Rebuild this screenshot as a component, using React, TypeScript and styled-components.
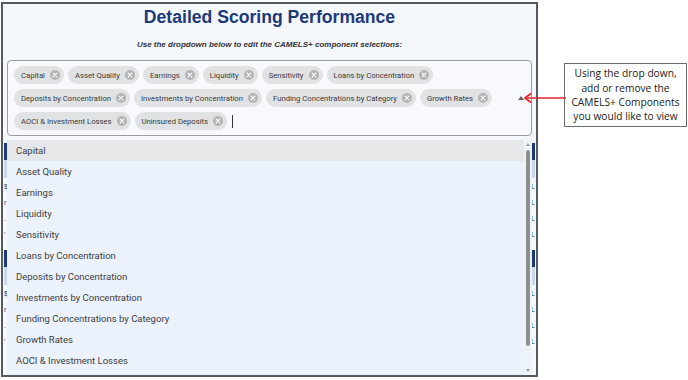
import React from "react";
import styled, { createGlobalStyle } from "styled-components";

const Global = createGlobalStyle`
  html, body { margin: 0; padding: 0; background: #ffffff; }
  body { width: 688px; height: 380px; overflow: hidden; font-family: Roboto, "Liberation Sans", sans-serif; }
`;

const Page = styled.div`
  position: relative;
  display: flex;
  align-items: flex-start;
  padding: 2px 0 0 1px;
`;

const Frame = styled.div`
  position: relative;
  box-sizing: border-box;
  width: 537px;
  height: 375px;
  border: 2px solid #555a60;
  background: #f4f7fc;
  overflow: hidden;
  display: flex;
  flex-direction: column;
  & > * { flex-shrink: 0; }
`;

const Title = styled.h1`
  margin: 2px 0 0;
  text-align: center;
  font-family: "Liberation Sans", Arial, sans-serif;
  font-weight: 700;
  font-size: 17.6px;
  line-height: 22px;
  color: #1d3a78;
`;

const Subtitle = styled.p`
  margin: 12px 0 0;
  text-align: center;
  font-family: "Liberation Sans", Arial, sans-serif;
  font-weight: 700;
  font-style: italic;
  font-size: 8px;
  line-height: 10px;
  color: #333333;
`;

const SelectBox = styled.div`
  box-sizing: border-box;
  margin: 10px 0 0 4px;
  width: 525px;
  height: 76px;
  border: 1px solid #9a9da3;
  border-radius: 4px;
  background: #f7f9fc;
  display: flex;
  align-items: center;
  padding: 0 6px;
`;

const ChipWrap = styled.div`
  flex: 1;
  display: flex;
  flex-wrap: wrap;
  align-content: flex-start;
  gap: 5px 4px;
  height: 64px;
  padding-right: 6px;
`;

const Chip = styled.span`
  display: inline-flex;
  align-items: center;
  gap: 5px;
  height: 18px;
  padding: 0 4px 0 7px;
  border-radius: 9px;
  background: #e1e2e4;
  font-family: Roboto, "Liberation Sans", sans-serif;
  font-size: 7.7px;
  color: #3a3a3a;
  white-space: nowrap;
`;

const Cursor = styled.span`
  display: inline-block;
  width: 1px;
  height: 13px;
  margin: 3px 0 0 1px;
  background: #333;
`;

const Caret = styled.span`
  width: 0;
  height: 0;
  border-left: 3px solid transparent;
  border-right: 3px solid transparent;
  border-bottom: 4px solid #666;
  margin-right: 1px;
`;

const Behind = styled.div`
  margin-top: 7px;
  display: flex;
  flex-direction: column;
  gap: 8px;
`;

const BehindSection = styled.div`
  display: flex;
  flex-direction: column;
`;

const BehindHead = styled.div`
  height: 17px;
  background: #1d3a78;
  margin: 0 1px;
`;

const BehindSub = styled.div`
  height: 18px;
  background: #c9d8ee;
  margin: 0 1px;
`;

const BehindRow = styled.div`
  height: 16px;
  display: flex;
  justify-content: space-between;
  align-items: center;
  padding: 0 1px;
  font-family: "Liberation Sans", Arial, sans-serif;
  font-size: 7px;
  color: #1d3a78;
`;

const Menu = styled.div`
  position: absolute;
  left: 4px;
  right: 4px;
  top: 136px;
  bottom: 0;
  display: flex;
  background: #ebf2fb;
`;

const List = styled.ul`
  flex: 1;
  list-style: none;
  margin: 0;
  padding: 0;
`;

const Item = styled.li<{ $active?: boolean }>`
  height: 21px;
  display: flex;
  align-items: center;
  padding-left: 9px;
  font-family: Roboto, "Liberation Sans", sans-serif;
  font-size: 9.5px;
  color: #404040;
  background: ${(p) => (p.$active ? "#e6e7e9" : "transparent")};
`;

const Scrollbar = styled.div`
  width: 8px;
  display: flex;
  flex-direction: column;
  align-items: center;
  background: #eef3f9;
  padding: 3px 0 3px;
`;

const ScrollArrow = styled.span<{ $down?: boolean }>`
  width: 0;
  height: 0;
  border-left: 2.5px solid transparent;
  border-right: 2.5px solid transparent;
  ${(p) =>
    p.$down
      ? "border-top: 3px solid #9a9a9a;"
      : "border-bottom: 3px solid #9a9a9a;"}
`;

const Thumb = styled.div`
  width: 4px;
  height: 196px;
  margin: 4px 0 0;
  border-radius: 2px;
  background: #8f8f8f;
`;

const ScrollSpacer = styled.div`
  flex: 1;
`;

const ArrowSvg = styled.svg`
  position: absolute;
  left: 521px;
  top: 91px;
`;

const Callout = styled.div`
  box-sizing: border-box;
  margin: 61px 0 0 26px;
  width: 123px;
  height: 64px;
  border: 1px solid #6b6b6b;
  background: #ffffff;
  display: flex;
  align-items: center;
  justify-content: center;
  text-align: center;
  font-family: "Open Sans", "Noto Sans", sans-serif;
  font-size: 10.2px;
  line-height: 14.3px;
  color: #222222;
`;

const XIcon = () => (
  <svg width="10" height="10" viewBox="0 0 10 10">
    <circle cx="5" cy="5" r="5" fill="#b3b4b7" />
    <path d="M3.2 3.2 L6.8 6.8 M6.8 3.2 L3.2 6.8" stroke="#ffffff" strokeWidth="1.2" strokeLinecap="round" />
  </svg>
);

const options = [
  "Capital",
  "Asset Quality",
  "Earnings",
  "Liquidity",
  "Sensitivity",
  "Loans by Concentration",
  "Deposits by Concentration",
  "Investments by Concentration",
  "Funding Concentrations by Category",
  "Growth Rates",
  "AOCI & Investment Losses",
  "Uninsured Deposits",
];

const behindRows = ["$", "r", ".", "'"];

export default function App() {
  return (
    <>
      <Global />
      <Page>
        <Frame>
          <Title>Detailed Scoring Performance</Title>
          <Subtitle>Use the dropdown below to edit the CAMELS+ component selections:</Subtitle>
          <SelectBox>
            <ChipWrap>
              {options.map((o) => (
                <Chip key={o}>
                  {o}
                  <XIcon />
                </Chip>
              ))}
              <Cursor />
            </ChipWrap>
            <Caret />
          </SelectBox>
          <Behind>
            {[0, 1].map((s) => (
              <BehindSection key={s}>
                <BehindHead />
                <BehindSub />
                {behindRows.map((r, i) => (
                  <BehindRow key={i}>
                    <span>{r}</span>
                    <span>L</span>
                  </BehindRow>
                ))}
              </BehindSection>
            ))}
          </Behind>
          <Menu>
            <List>
              {options.slice(0, 11).map((o, i) => (
                <Item key={o} $active={i === 0}>
                  {o}
                </Item>
              ))}
            </List>
            <Scrollbar>
              <ScrollArrow />
              <Thumb />
              <ScrollSpacer />
              <ScrollArrow $down />
            </Scrollbar>
          </Menu>
        </Frame>
        <ArrowSvg width="46" height="14" viewBox="0 0 46 14">
          <path d="M6 7 H45" stroke="#e5262d" strokeWidth="1.6" />
          <path d="M10 2.5 L4 7 L10 11.5" fill="none" stroke="#e5262d" strokeWidth="1.8" strokeLinejoin="miter" />
        </ArrowSvg>
        <Callout>
          Using the drop down,
          <br />
          add or remove the
          <br />
          CAMELS+ Components
          <br />
          you would like to view
        </Callout>
      </Page>
    </>
  );
}
